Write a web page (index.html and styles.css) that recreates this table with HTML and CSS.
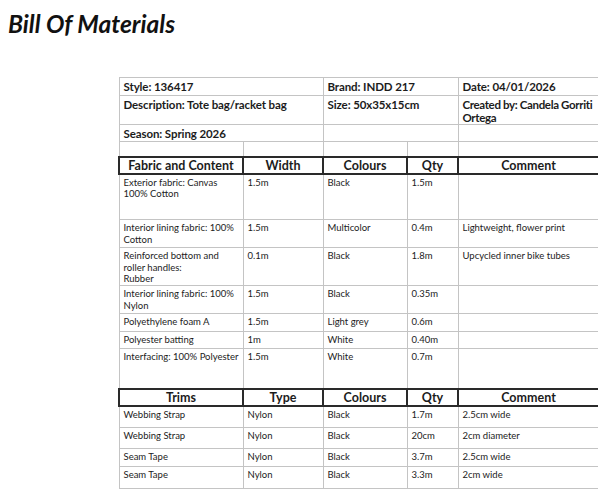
FILE: index.html
```html
<!DOCTYPE html>
<html lang="en">
  <head>
    <meta charset="UTF-8" />
    <title>Bill Of Materials</title>
    <link rel="stylesheet" href="styles.css">
  </head>
  <body>
    <h1>Bill Of Materials</h1>

    <div class="sheet">
      <table>
        <colgroup>
          <col class="c1" />
          <col class="c2" />
          <col class="c3" />
          <col class="c4" />
          <col class="c5" />
        </colgroup>
        <tr class="info h18">
          <td colspan="2">Style: 136417</td>
          <td colspan="2">Brand: INDD 217</td>
          <td>Date: 04/01/2026</td>
        </tr>
        <tr class="info h29">
          <td colspan="2">Description: Tote bag/racket bag</td>
          <td colspan="2">Size: 50x35x15cm</td>
          <td class="tight">Created by: Candela Gorriti<br />Ortega</td>
        </tr>
        <tr class="info h17">
          <td colspan="2">Season: Spring 2026</td>
          <td colspan="2"></td>
          <td></td>
        </tr>
        <tr class="h15">
          <td></td><td></td><td></td><td></td><td></td>
        </tr>

        <tr class="head">
          <th>Fabric and Content</th>
          <th>Width</th>
          <th>Colours</th>
          <th>Qty</th>
          <th>Comment</th>
        </tr>
        <tr class="h46">
          <td>Exterior fabric: Canvas<br />100% Cotton</td>
          <td>1.5m</td>
          <td>Black</td>
          <td>1.5m</td>
          <td></td>
        </tr>
        <tr class="h28">
          <td>Interior lining fabric: 100%<br />Cotton</td>
          <td>1.5m</td>
          <td>Multicolor</td>
          <td>0.4m</td>
          <td>Lightweight, flower print</td>
        </tr>
        <tr class="h38">
          <td>Reinforced bottom and<br />roller handles:<br />Rubber</td>
          <td>0.1m</td>
          <td>Black</td>
          <td>1.8m</td>
          <td>Upcycled inner bike tubes</td>
        </tr>
        <tr class="h28">
          <td>Interior lining fabric: 100%<br />Nylon</td>
          <td>1.5m</td>
          <td>Black</td>
          <td>0.35m</td>
          <td></td>
        </tr>
        <tr class="h18">
          <td>Polyethylene foam A</td>
          <td>1.5m</td>
          <td>Light grey</td>
          <td>0.6m</td>
          <td></td>
        </tr>
        <tr class="h17">
          <td>Polyester batting</td>
          <td>1m</td>
          <td>White</td>
          <td>0.40m</td>
          <td></td>
        </tr>
        <tr class="h40">
          <td>Interfacing: 100% Polyester</td>
          <td>1.5m</td>
          <td>White</td>
          <td>0.7m</td>
          <td></td>
        </tr>

        <tr class="head">
          <th>Trims</th>
          <th>Type</th>
          <th>Colours</th>
          <th>Qty</th>
          <th>Comment</th>
        </tr>
        <tr class="h22">
          <td>Webbing Strap</td>
          <td>Nylon</td>
          <td>Black</td>
          <td>1.7m</td>
          <td>2.5cm wide</td>
        </tr>
        <tr class="h21">
          <td>Webbing Strap</td>
          <td>Nylon</td>
          <td>Black</td>
          <td>20cm</td>
          <td>2cm diameter</td>
        </tr>
        <tr class="h18">
          <td>Seam Tape</td>
          <td>Nylon</td>
          <td>Black</td>
          <td>3.7m</td>
          <td>2.5cm wide</td>
        </tr>
        <tr class="h22">
          <td>Seam Tape</td>
          <td>Nylon</td>
          <td>Black</td>
          <td>3.3m</td>
          <td>2cm wide</td>
        </tr>
      </table>
    </div>
  </body>
</html>
```

FILE: styles.css
```css
* {
  margin: 0;
  padding: 0;
  box-sizing: border-box;
  font-family: Lato, "Open Sans", sans-serif;
}

body {
  background: #fff;
  color: #1c1c1c;
}

h1 {
  font-size: 24.5px;
  font-weight: 700;
  font-style: italic;
  padding: 10px 0 0 8px;
  height: 77px;
  line-height: 28px;
  color: #111;
}

.sheet {
  padding-left: 118px;
}

table {
  border-collapse: collapse;
  table-layout: fixed;
  width: 480px;
}

.c1 { width: 124px; }
.c2 { width: 80px; }
.c3 { width: 84px; }
.c4 { width: 51px; }
.c5 { width: 141px; }

td {
  border: 1px solid #c4c4c4;
  font-size: 9.5px;
  line-height: 11.5px;
  padding: 2px 3px 0 4px;
  vertical-align: top;
  white-space: nowrap;
}

.info td {
  font-size: 11.5px;
  font-weight: 700;
  line-height: 13px;
  padding-top: 2px;
  letter-spacing: -0.1px;
}

.info td.tight {
  letter-spacing: -0.35px;
  padding-right: 0;
}

th {
  border: 2px solid #2a2a2a;
  font-size: 12.5px;
  font-weight: 700;
  line-height: 13px;
  height: 17px;
  text-align: center;
  vertical-align: middle;
  padding: 0;
}

.h15 { height: 15px; }
.h17 { height: 17px; }
.h18 { height: 18px; }
.h21 { height: 21px; }
.h22 { height: 22px; }
.h28 { height: 28px; }
.h29 { height: 29px; }
.h38 { height: 38px; }
.h40 { height: 40px; }
.h46 { height: 46px; }
```
